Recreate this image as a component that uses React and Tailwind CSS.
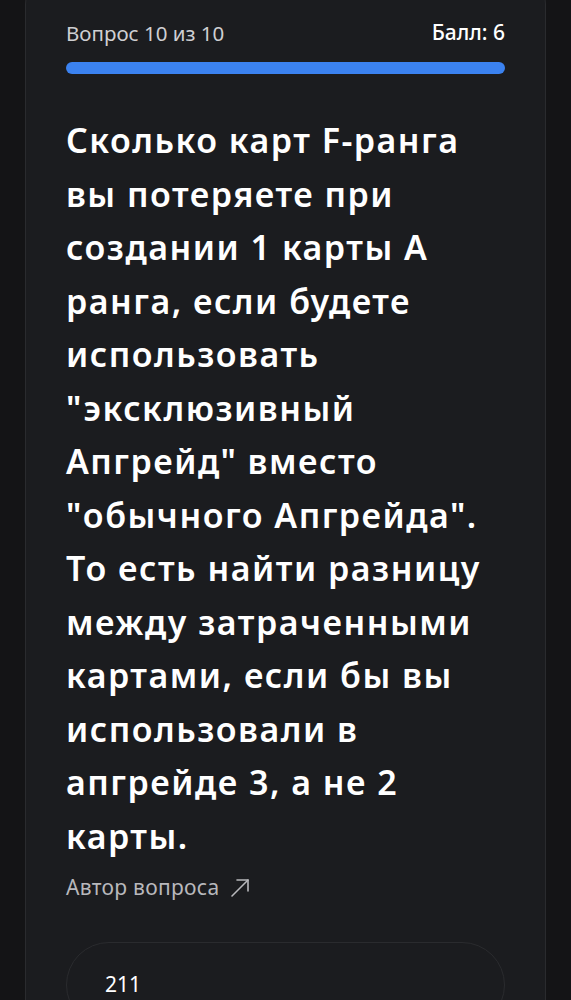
import React from "react";

const lines = [
  "Сколько карт F-ранга",
  "вы потеряете при",
  "создании 1 карты А",
  "ранга, если будете",
  "использовать",
  "\"эксклюзивный",
  "Апгрейд\" вместо",
  "\"обычного Апгрейда\".",
  "То есть найти разницу",
  "между затраченными",
  "картами, если бы вы",
  "использовали в",
  "апгрейде 3, а не 2",
  "карты.",
];

function ArrowUpRight() {
  return (
    <svg width="20" height="20" viewBox="0 0 20 20" fill="none" stroke="currentColor" strokeWidth="1.6" strokeLinecap="round" strokeLinejoin="round">
      <path d="M2 18 18 2" />
      <path d="M7 2h11v11" />
    </svg>
  );
}

export default function App() {
  return (
    <div className="min-h-screen bg-[#141416] px-[25px] overflow-hidden" style={{ fontFamily: '"Noto Sans", sans-serif' }}>
      <div className="-mt-5 rounded-3xl border border-[#2a2b2e] bg-[#1b1c1f] px-10 pt-[38px] pb-10">
        <div className="flex items-center justify-between h-7">
          <span className="text-[20.5px] text-[#cfcfd2]">Вопрос 10 из 10</span>
          <span className="text-[21px] font-medium text-white">Балл: 6</span>
        </div>
        <div className="mt-[15px] h-3 rounded-full bg-[#3b82f0]" />
        <h1 className="mt-[40px] text-[34px] font-semibold leading-[53.5px] tracking-[1.5px] text-white">
          {lines.map((l) => (
            <span key={l} className="block whitespace-nowrap">{l}</span>
          ))}
        </h1>
        <div className="mt-[11px] flex items-center gap-[10px] h-7 text-[21px] tracking-[0.3px] text-[#b8b8bc]">
          <span>Автор вопроса</span>
          <ArrowUpRight />
        </div>
        <div className="mt-10 h-[86px] rounded-full border border-[#2a2b2e] flex items-center px-[38px]">
          <span className="text-[21px] text-white">211</span>
        </div>
      </div>
    </div>
  );
}
